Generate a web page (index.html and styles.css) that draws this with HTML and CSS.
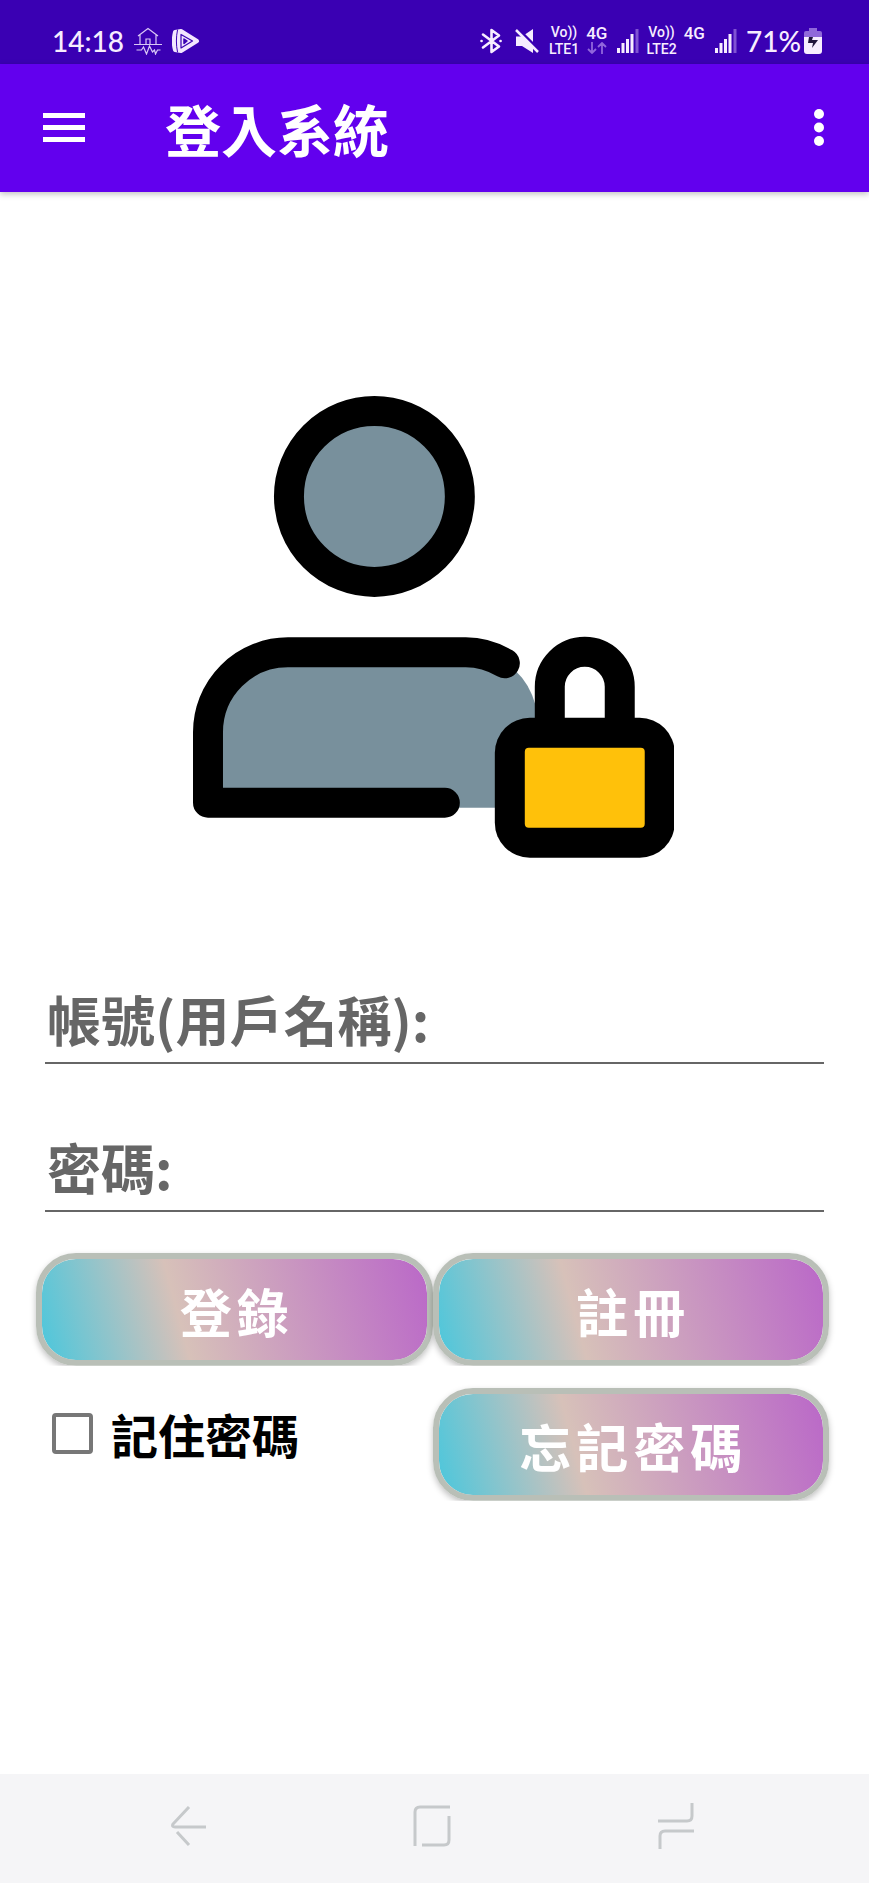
FILE: index.html
```html
<!DOCTYPE html>
<html lang="zh-Hant">
<head>
<meta charset="utf-8">
<meta name="viewport" content="width=device-width, initial-scale=1">
<title>登入系統</title>
<link rel="stylesheet" href="styles.css">
</head>
<body>
<div class="screen">
  <div class="status">
    <div class="status-group">
      <span class="clock">14:18</span>
      <svg class="home-alert" width="28" height="28" viewBox="0 0 28 28" fill="none" stroke="#d9c8f5" stroke-width="1.2">
        <path d="M0 17.500h28M6 17V8M22 17V8M4 9 14 1.500 24 9M12 17v-5h4v5M2.500 23h5l2-3 3 7 3-8 3 6 2-2 1 4 2-4h3"/>
      </svg>
      <svg width="28" height="26" viewBox="0 0 28 26" fill="none" stroke-linejoin="round" stroke-linecap="round">
        <path d="M3 4C1.500 10 1.500 17 3 22L9 23 25 13 9 3Z" fill="#f3e6ff" stroke="#f3e6ff" stroke-width="4"/>
        <path d="M5.500 2C4 9 4 17 5.500 24" stroke="#3a00b3" stroke-width="1"/>
        <path d="M9 6.500V20L20.500 13Z" stroke="#3a00b3" stroke-width="1.200"/>
        <path d="M12 11V15.500L15 13Z" fill="#3a00b3" stroke="#3a00b3" stroke-width="1.500"/>
      </svg>
    </div>
    <div class="status-group status-right">
      <svg width="22" height="26" viewBox="0 0 22 26" fill="none" stroke="#f7edff" stroke-width="2.600" stroke-linejoin="round" stroke-linecap="round">
        <path d="M3 6.500 19 18.500 11.500 24V2L19 7.500 3 19.500M1.500 13h.1M20.500 13h.1"/>
      </svg>
      <svg class="mute" width="24" height="24" viewBox="0 0 24 24">
        <path d="M1 7.500h6L18 0v24L7 17H1Z" fill="#f7edff"/>
        <path d="M3 0 25 22" stroke="#3a00b3" stroke-width="3"/>
        <path d="M1 1 23 23" stroke="#f7edff" stroke-width="2.500"/>
      </svg>
      <span class="volte"><span>Vo))</span><span>LTE1</span></span>
      <span class="net"><span>4G</span>
        <svg width="20" height="12" viewBox="0 0 20 12" fill="none" stroke="#9166dc" stroke-width="1.800"><path d="M5 0v11M1 7l4 4 4-4M15 12V1M11 5l4-4 4 4"/></svg>
      </span>
      <svg class="bars" width="22" height="24" viewBox="0 0 22 24"><path d="M0 19h3v5H0ZM4.500 14h3v10h-3ZM9 10h3v14H9ZM13.500 5h3v19h-3Z" fill="#f7edff"/><path d="M18.500 0h3v24h-3Z" fill="#8053d3"/></svg>
      <span class="volte"><span>Vo))</span><span>LTE2</span></span>
      <span class="net"><span>4G</span></span>
      <svg class="bars" width="22" height="24" viewBox="0 0 22 24"><path d="M0 19h3v5H0ZM4.500 14h3v10h-3ZM9 10h3v14H9ZM13.500 5h3v19h-3Z" fill="#f7edff"/><path d="M18.500 0h3v24h-3Z" fill="#8053d3"/></svg>
      <span class="battery">
        <span class="clock">71%</span>
        <svg width="18" height="26" viewBox="0 0 18 26"><path d="M5 0h8v3h3q2 0 2 2v5H0V5q0-2 2-2h3Z" fill="#9068da"/><path d="M0 9h18v14q0 3-3 3H3q-3 0-3-3Z" fill="#f7edff"/><path d="M5 9h4l-1 3h6L8 20l1-5H4Z" fill="#20143c"/></svg>
      </span>
    </div>
  </div>

  <header class="appbar">
    <button class="icon-btn" type="button" aria-label="選單">
      <svg width="42" height="30" viewBox="0 0 42 30" fill="#fff"><path d="M0 0h42v5H0ZM0 12h42v5H0ZM0 24h42v5H0Z"/></svg>
    </button>
    <h1 class="title">登入系統</h1>
    <button class="icon-btn" type="button" aria-label="更多">
      <svg width="10" height="38" viewBox="0 0 10 38" fill="#fff"><circle cx="5" cy="5" r="5"/><circle cx="5" cy="18.500" r="5"/><circle cx="5" cy="32" r="5"/></svg>
    </button>
  </header>

  <main class="content">
    <svg class="hero" viewBox="0 0 482 462" role="img" aria-label="使用者登入">
      <circle cx="181.500" cy="100.500" r="85.500" fill="#78909c" stroke="#000" stroke-width="30"/>
      <path d="M15 412V336Q20 256 95 256H270Q347 260 347 345V412Z" fill="#78909c"/>
      <path d="M312 267.500Q293 256.500 273 256.500H95A80 80 0 0 0 15 336.500V407H252" fill="none" stroke="#000" stroke-width="30" stroke-linecap="round" stroke-linejoin="round"/>
      <path d="M357 345V291a35 35 0 0 1 70 0v54Z" fill="#fff" stroke="#000" stroke-width="30"/>
      <rect x="302" y="322" width="180" height="140" rx="35"/>
      <rect x="332" y="352" width="120" height="80" rx="4" fill="#ffc10a"/>
    </svg>

    <form class="form">
      <input class="field" type="text" aria-label="帳號(用戶名稱)" placeholder="帳號(用戶名稱):">
      <input class="field" type="password" aria-label="密碼" placeholder="密碼:">
      <div class="actions">
        <button class="btn" type="button">登錄</button>
        <button class="btn" type="button">註冊</button>
        <label class="remember"><input class="check" type="checkbox">記住密碼</label>
        <button class="btn" type="button">忘記密碼</button>
      </div>
    </form>
  </main>

  <nav class="navbar">
    <button class="nav-btn" type="button" aria-label="返回">
      <svg width="36" height="40" viewBox="0 0 36 40"><path d="M18 1 2 18q-1.500 3 2 3H35M6 26 18 39"/></svg>
    </button>
    <button class="nav-btn" type="button" aria-label="主畫面">
      <svg width="38" height="42" viewBox="0 0 38 42"><path d="M2 41V7q0-5 5-5H37M36 11V35q0 5-5 5H9"/></svg>
    </button>
    <button class="nav-btn" type="button" aria-label="最近使用">
      <svg width="36" height="46" viewBox="0 0 36 46"><path d="M34 0V13q0 5-5 5H0M2 46V33q0-5 5-5H36"/></svg>
    </button>
  </nav>
</div>
</body>
</html>
```

FILE: styles.css
```css
* { box-sizing: border-box; }

body {
  margin: 0;
  background: #fff;
  font-family: "Noto Sans CJK TC", "Noto Sans", sans-serif;
}

button {
  border: 0;
  padding: 0;
  background: none;
  font: inherit;
  color: inherit;
}

svg { display: block; flex: none; }

.screen {
  min-height: 100vh;
  display: flex;
  flex-direction: column;
}

.status {
  height: 64px;
  padding: 18px 47px 0 52px;
  display: flex;
  justify-content: space-between;
  align-items: center;
  background: #3a00b3;
  color: #f7edff;
}

.status-group {
  display: flex;
  align-items: center;
  gap: 10px;
}

.clock {
  font: 500 28px/32px Lato, sans-serif;
}

.status-right { gap: 7px; }
.mute { margin: 0 3px 0 6px; }
.bars { margin-left: 3px; }

.battery {
  margin-left: 2px;
  display: flex;
  align-items: center;
  gap: 3px;
}

.volte,
.net {
  display: flex;
  flex-direction: column;
  align-items: center;
  font: 500 14px/17px Roboto, sans-serif;
}

.net {
  height: 32px;
  font-size: 17px;
}

.appbar {
  height: 128px;
  padding: 0 45px 0 43px;
  display: flex;
  align-items: center;
  background: #6200ee;
  color: #fff;
  box-shadow: 0 2px 6px #00000040;
}

.title {
  flex: 1;
  margin: 0 0 0 80px;
  font-size: 56px;
  line-height: 64px;
  font-weight: 700;
}

.content {
  flex: 1;
  padding: 204px 40px 0 36px;
}

.hero {
  width: 61%;
  margin: 0 auto;
  padding-left: 2px;
}

.form {
  padding-top: 120px;
  display: flex;
  flex-direction: column;
}

.field {
  height: 86px;
  margin: 0 5px 62px 9px;
  padding: 0 2px 2px;
  border: 0;
  border-bottom: 2px solid #666;
  border-radius: 0;
  background: none;
  color: #222;
  font: 700 54px/72px "Noto Sans CJK TC", sans-serif;
}

.field::placeholder { color: #666; opacity: 1; }

.field + .field { margin-bottom: 41px; }

.actions {
  display: grid;
  grid-template-columns: 1fr 1fr;
  row-gap: 22px;
}

.btn {
  height: 113px;
  padding: 4px 0 0 5px;
  border: 6px solid #b9bfb7;
  border-radius: 40px;
  background: linear-gradient(75deg, #4bc7dc, #d7c1b9 36%, #ba68c8) padding-box;
  box-shadow: 0 3px 6px #00000040;
  clip-path: inset(-8px -8px 0 -8px);
  color: #fff;
  font-size: 52px;
  line-height: 64px;
  font-weight: 700;
  letter-spacing: 5px;
}

.remember {
  height: 92px;
  padding-left: 16px;
  display: flex;
  align-items: center;
  gap: 18px;
  color: #000;
  font-size: 47px;
  line-height: 64px;
  font-weight: 700;
}

.check {
  appearance: none;
  flex: none;
  width: 41px;
  height: 41px;
  margin: 0;
  border: 4px solid #777;
  border-radius: 4px;
  background: #fff;
}

.check:checked { background: #6200ee; }

.navbar {
  height: 109px;
  padding: 0 71px 6px 67px;
  display: grid;
  grid-template-columns: repeat(3, 1fr);
  align-items: center;
  justify-items: center;
  background: #f5f5f7;
}

.nav-btn svg {
  fill: none;
  stroke: #c6c9cb;
  stroke-width: 3;
}
```
